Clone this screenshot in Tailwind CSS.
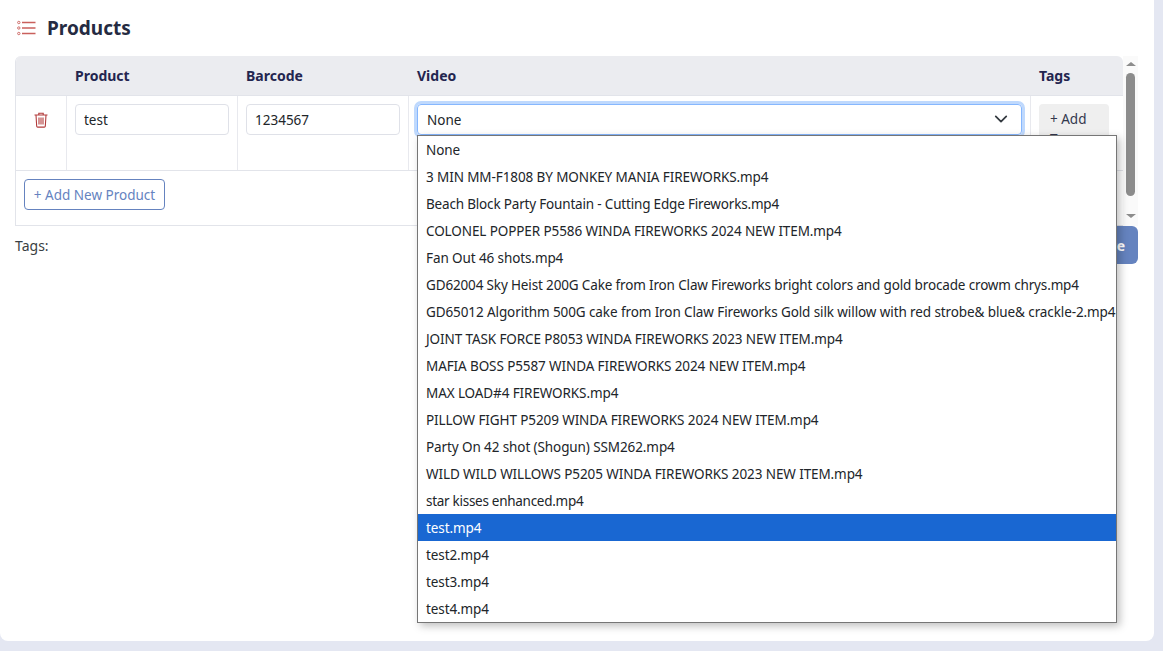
<!DOCTYPE html>
<html lang="en">
<head>
    <meta charset="UTF-8" />
    <title>Products</title>
    <script src="https://cdn.jsdelivr.net/npm/@tailwindcss/browser@4"></script>
</head>
<body class="bg-[#e4e7f2] h-[651px] overflow-hidden font-['Noto_Sans',sans-serif] text-[13.5px] text-[#212529]">
    <div class="relative w-[1154px] h-[641px] bg-white rounded-b-lg px-[15px]">

        <!-- heading -->
        <div class="flex items-center h-[56px]">
            <svg class="w-[20px] h-[16px] ml-[1px] text-[#c9605c]" viewBox="0 0 20 16" fill="none" stroke="currentColor">
                <circle cx="2.8" cy="2.5" r="1.2" stroke-width="0.9"/>
                <circle cx="2.8" cy="8" r="1.2" stroke-width="0.9"/>
                <circle cx="2.8" cy="13.5" r="1.2" stroke-width="0.9"/>
                <path d="M6 2.5h13.5M6 8h13.5M6 13.5h13.5" stroke-width="1.3"/>
            </svg>
            <h1 class="ml-[11px] text-[19px] font-bold text-[#252b42]">Products</h1>
        </div>

        <!-- table + scrollbar -->
        <div class="flex w-[1123px] h-[170px]">
            <div class="w-[1108px] h-[170px] border-b border-l border-[#e2e4ea] rounded-t-md overflow-hidden">
                <div class="flex h-[40px] bg-[#ebecf0] border-b border-[#e2e4ea] text-[14px] font-bold text-[#23254f]">
                    <div class="w-[51px]"></div>
                    <div class="w-[171px] pl-[8px] pt-[9px]">Product</div>
                    <div class="w-[171px] pl-[8px] pt-[9px]">Barcode</div>
                    <div class="w-[622px] pl-[8px] pt-[9px]">Video</div>
                    <div class="flex-1 pl-[8px] pt-[9px]">Tags</div>
                </div>
                <div class="flex h-[75px] border-b border-[#e2e4ea]">
                    <div class="w-[51px] border-r border-[#e8e9ee] flex justify-center pt-[16px]">
                        <svg class="w-[16px] h-[16px] text-[#b23b3b]" viewBox="0 0 16 16" fill="none" stroke="currentColor" stroke-width="1.1">
                            <path d="M1.5 3h13M5.8 3V1.2h4.4V3M3 3l.7 11.2a1 1 0 0 0 1 .9h6.6a1 1 0 0 0 1-.9L13 3M6 5.5v7M8 5.5v7M10 5.5v7"/>
                        </svg>
                    </div>
                    <div class="w-[171px] border-r border-[#e8e9ee] px-[8px] pt-[8px]">
                        <input type="text" value="test" class="w-[154px] h-[31px] px-[8px] pt-[1px] border border-[#dfe1e8] rounded-[4px]" />
                    </div>
                    <div class="w-[171px] border-r border-[#e8e9ee] px-[8px] pt-[8px]">
                        <input type="text" value="1234567" class="w-[154px] h-[31px] px-[8px] pt-[1px] border border-[#dfe1e8] rounded-[4px]" />
                    </div>
                    <div class="w-[622px] border-r border-[#e8e9ee] px-[8px] pt-[8px]">
                        <div class="relative w-[605px] h-[31px]">
                            <select class="w-full h-full appearance-none pl-[9px] pt-[2px] border border-[#86b7fe] rounded-[4px] shadow-[0_0_0_3px_#bfd9fd] outline-none">
                                <option>None</option>
                            </select>
                            <svg class="absolute right-[14px] top-[8px] w-[14px] h-[14px] text-[#343a40]" viewBox="0 0 16 16" fill="none" stroke="currentColor" stroke-width="2" stroke-linecap="round" stroke-linejoin="round">
                                <path d="m2 5 6 6 6-6"/>
                            </svg>
                        </div>
                    </div>
                    <div class="flex-1 px-[8px] pt-[8px]">
                        <button class="w-[70px] bg-[#efefef] rounded-[4px] px-[11px] py-[5px] text-left leading-[20px] text-[#33374d]">+ Add Tag</button>
                    </div>
                </div>
                <div class="pl-[8px] pt-[8px]">
                    <button class="h-[31px] w-[141px] pt-[1px] border border-[#6583bf] rounded-[4px] text-[#6583bf] text-center">+ Add New Product</button>
                </div>
            </div>

            <!-- scrollbar -->
            <div class="w-[15px] h-[170px] bg-[#fafafa] flex flex-col items-center justify-between pt-[6px] pb-[8px]">
                <div class="flex flex-col items-center gap-[7px]">
                    <div class="w-0 h-0 border-x-[5px] border-x-transparent border-b-[4px] border-b-[#8c8c8c]"></div>
                    <div class="w-[9px] h-[123px] rounded-full bg-[#8c8c8c]"></div>
                </div>
                <div class="w-0 h-0 border-x-[5px] border-x-transparent border-t-[4px] border-t-[#8c8c8c]"></div>
            </div>
        </div>

        <!-- footer of the form -->
        <div class="flex justify-between w-[1123px] h-[38px]">
            <div class="text-[14px] text-[#3a3f44] pt-[9px]">Tags:</div>
            <button class="w-[58px] h-[38px] bg-[#6583bf] rounded-md text-[14px] text-white font-bold">Save</button>
        </div>

        <!-- opened dropdown -->
        <ul class="absolute left-[417px] top-[135px] w-[700px] h-[488px] bg-white border border-[#767676] shadow-[3px_3px_8px_rgba(0,0,0,0.25)] text-[#212529] tracking-[-0.1px] whitespace-nowrap overflow-hidden">
            <li class="h-[27px] leading-[28px] pl-[8px]">None</li>
            <li class="h-[27px] leading-[28px] pl-[8px]">3 MIN MM-F1808 BY MONKEY MANIA FIREWORKS.mp4</li>
            <li class="h-[27px] leading-[28px] pl-[8px] tracking-[-0.18px]">Beach Block Party Fountain - Cutting Edge Fireworks.mp4</li>
            <li class="h-[27px] leading-[28px] pl-[8px]">COLONEL POPPER P5586 WINDA FIREWORKS 2024 NEW ITEM.mp4</li>
            <li class="h-[27px] leading-[28px] pl-[8px]">Fan Out 46 shots.mp4</li>
            <li class="h-[27px] leading-[28px] pl-[8px] tracking-[-0.15px]">GD62004 Sky Heist 200G Cake from Iron Claw Fireworks bright colors and gold brocade crowm chrys.mp4</li>
            <li class="h-[27px] leading-[28px] pl-[8px]">GD65012 Algorithm 500G cake from Iron Claw Fireworks Gold silk willow with red strobe&amp; blue&amp; crackle-2.mp4</li>
            <li class="h-[27px] leading-[28px] pl-[8px]">JOINT TASK FORCE P8053 WINDA FIREWORKS 2023 NEW ITEM.mp4</li>
            <li class="h-[27px] leading-[28px] pl-[8px]">MAFIA BOSS P5587 WINDA FIREWORKS 2024 NEW ITEM.mp4</li>
            <li class="h-[27px] leading-[28px] pl-[8px]">MAX LOAD#4 FIREWORKS.mp4</li>
            <li class="h-[27px] leading-[28px] pl-[8px]">PILLOW FIGHT P5209 WINDA FIREWORKS 2024 NEW ITEM.mp4</li>
            <li class="h-[27px] leading-[28px] pl-[8px]">Party On 42 shot (Shogun) SSM262.mp4</li>
            <li class="h-[27px] leading-[28px] pl-[8px]">WILD WILD WILLOWS P5205 WINDA FIREWORKS 2023 NEW ITEM.mp4</li>
            <li class="h-[27px] leading-[28px] pl-[8px] tracking-[-0.28px]">star kisses enhanced.mp4</li>
            <li class="h-[27px] leading-[28px] pl-[8px] bg-[#1967d2] text-white">test.mp4</li>
            <li class="h-[27px] leading-[28px] pl-[8px]">test2.mp4</li>
            <li class="h-[27px] leading-[28px] pl-[8px]">test3.mp4</li>
            <li class="h-[27px] leading-[28px] pl-[8px]">test4.mp4</li>
        </ul>
    </div>
</body>
</html>
